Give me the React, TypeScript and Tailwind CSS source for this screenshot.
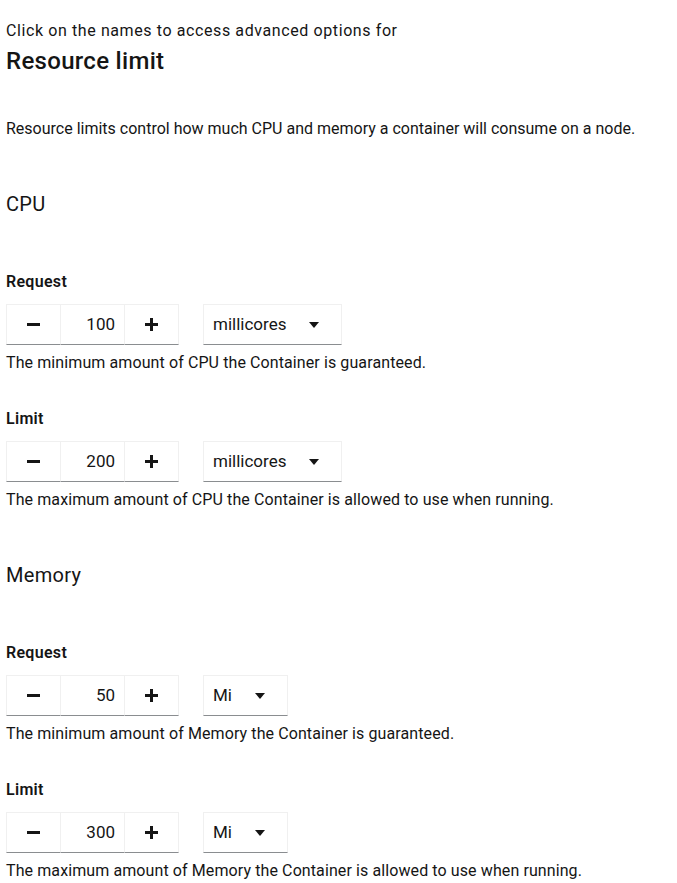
import React, { useState } from 'react';

type Field = {
    label: string;
    value: number;
    unit: string;
    units: string[];
    helper: string;
};

const MinusIcon = () => (
    <svg width="13" height="13" viewBox="0 0 13 13" fill="#151515">
        <rect x="0" y="5" width="13" height="3" />
    </svg>
);

const PlusIcon = () => (
    <svg width="13" height="13" viewBox="0 0 13 13" fill="#151515">
        <rect x="0" y="5" width="13" height="3" />
        <rect x="5" y="0" width="3" height="13" />
    </svg>
);

const CaretIcon = () => (
    <svg width="10" height="6" viewBox="0 0 10 6" fill="#151515">
        <path d="M0 0 L10 0 L5 6 Z" />
    </svg>
);

const NumberField: React.FC<{ field: Field; first: boolean }> = ({ field, first }) => {
    const [value, setValue] = useState(field.value);
    const [unit, setUnit] = useState(field.unit);

    return (
        <div className={first ? 'mt-[51px]' : 'mt-[32px]'}>
            <label className="block font-semibold leading-6 tracking-[0.3px]">{field.label}</label>
            <div className="mt-[10px] flex items-start">
                <div className="flex h-[41px]">
                    <button
                        type="button"
                        onClick={() => setValue(value - 1)}
                        className="flex w-[55px] items-center justify-center border border-[#f0f0f0] border-b-[#8a8d90]"
                    >
                        <MinusIcon />
                    </button>
                    <input
                        type="text"
                        value={value}
                        onChange={e => setValue(Number(e.target.value) || 0)}
                        className="w-[64px] border-y border-r border-[#f0f0f0] border-b-[#8a8d90] pr-[9px] text-right text-[17px] text-[#151515] outline-none"
                    />
                    <button
                        type="button"
                        onClick={() => setValue(value + 1)}
                        className="flex w-[54px] items-center justify-center border-y border-r border-[#f0f0f0] border-b-[#8a8d90]"
                    >
                        <PlusIcon />
                    </button>
                </div>
                <button
                    type="button"
                    onClick={() => setUnit(field.units[(field.units.indexOf(unit) + 1) % field.units.length])}
                    className="ml-[24px] flex h-[41px] items-center border border-[#f0f0f0] border-b-[#8a8d90] pl-[9px] pr-[22px] text-[17px]"
                >
                    <span>{unit}</span>
                    <span className="ml-[23px] flex items-center">
                        <CaretIcon />
                    </span>
                </button>
            </div>
            <p className="mt-[6px] leading-6 tracking-[0.1px]">{field.helper}</p>
        </div>
    );
};

const sections: { title: string; fields: Field[] }[] = [
    {
        title: 'CPU',
        fields: [
            { label: 'Request', value: 100, unit: 'millicores', units: ['millicores', 'cores'], helper: 'The minimum amount of CPU the Container is guaranteed.' },
            { label: 'Limit', value: 200, unit: 'millicores', units: ['millicores', 'cores'], helper: 'The maximum amount of CPU the Container is allowed to use when running.' },
        ],
    },
    {
        title: 'Memory',
        fields: [
            { label: 'Request', value: 50, unit: 'Mi', units: ['Mi', 'Gi'], helper: 'The minimum amount of Memory the Container is guaranteed.' },
            { label: 'Limit', value: 300, unit: 'Mi', units: ['Mi', 'Gi'], helper: 'The maximum amount of Memory the Container is allowed to use when running.' },
        ],
    },
];

export default function App() {
    return (
        <div className="min-h-screen bg-white pl-[6px] pt-[19px] text-[16px] text-[#151515] [font-family:Roboto,sans-serif]">
            <p className="leading-6 tracking-[0.6px]">Click on the names to access advanced options for</p>
            <h1 className="mt-[3px] text-[24px] font-medium leading-[30px] tracking-[0.3px]">Resource limit</h1>
            <p className="mt-[41px] leading-6">
                Resource limits control how much CPU and memory a container will consume on a node.
            </p>
            {sections.map(section => (
                <div key={section.title}>
                    <h2 className="mt-[48px] text-[20px] leading-[30px] tracking-[0.3px]">{section.title}</h2>
                    {section.fields.map((field, i) => (
                        <NumberField key={field.label} field={field} first={i === 0} />
                    ))}
                </div>
            ))}
        </div>
    );
}
